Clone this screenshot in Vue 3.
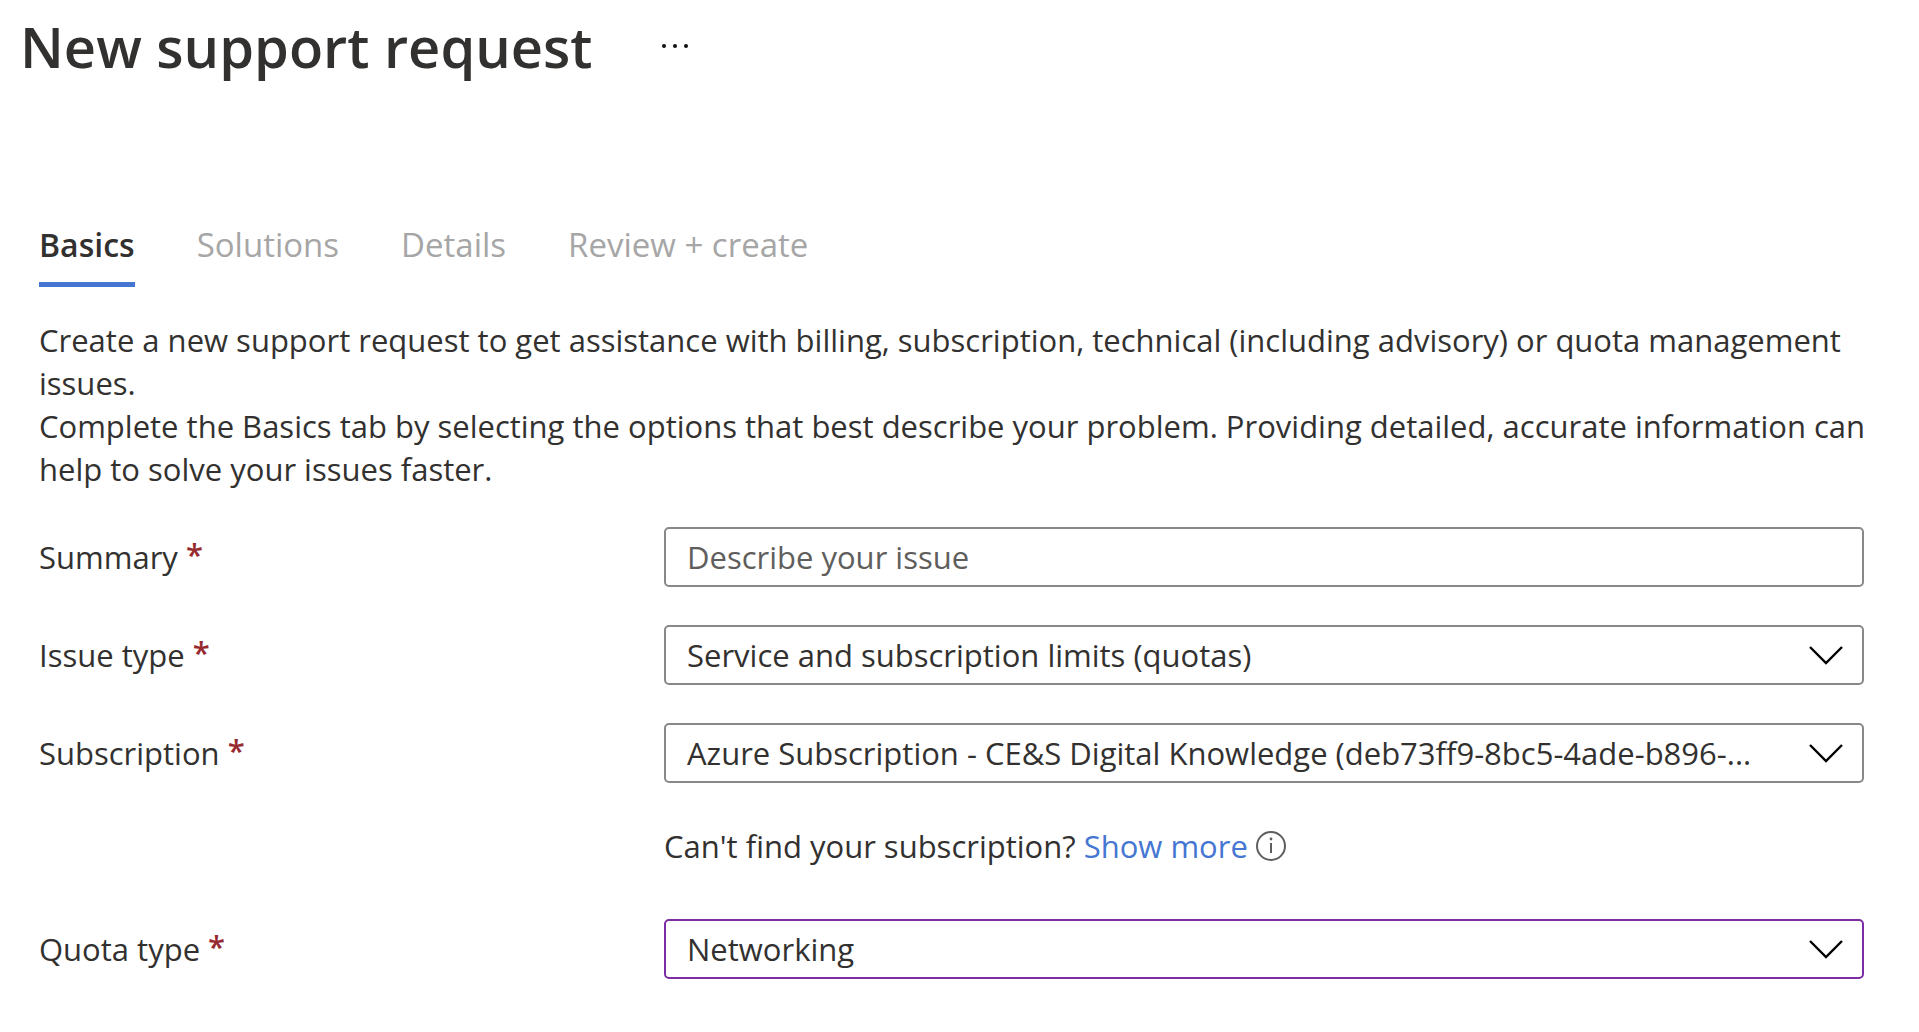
<script setup>
import { ref } from 'vue'

const tabs = ['Basics', 'Solutions', 'Details', 'Review + create']
const activeTab = ref('Basics')
const summary = ref('')
const issueType = ref('Service and subscription limits (quotas)')
const subscription = ref('Azure Subscription - CE&S Digital Knowledge (deb73ff9-8bc5-4ade-b896-...')
const quotaType = ref('Networking')
</script>

<template>
  <main class="page">
    <header class="header">
      <h1>New support request</h1>
      <button class="more" type="button" aria-label="More actions">
        <svg width="28" height="6" viewBox="0 0 28 6" fill="#111">
          <circle cx="3" cy="3" r="2" />
          <circle cx="14" cy="3" r="2" />
          <circle cx="25" cy="3" r="2" />
        </svg>
      </button>
    </header>

    <nav class="tabs" role="tablist">
      <button
        v-for="tab in tabs"
        :key="tab"
        type="button"
        role="tab"
        class="tab"
        :class="{ active: tab === activeTab }"
        :aria-selected="tab === activeTab"
        @click="activeTab = tab"
      >{{ tab }}</button>
    </nav>

    <section class="intro">
      <p>Create a new support request to get assistance with billing, subscription, technical (including advisory) or quota management issues.</p>
      <p>Complete the Basics tab by selecting the options that best describe your problem. Providing detailed, accurate information can help to solve your issues faster.</p>
    </section>

    <form class="form" @submit.prevent>
      <div class="row">
        <label for="summary">Summary <span class="required">*</span></label>
        <input id="summary" v-model="summary" class="control" type="text" placeholder="Describe your issue" />
      </div>

      <div class="row">
        <label for="issue-type">Issue type <span class="required">*</span></label>
        <div class="dropdown">
          <select id="issue-type" v-model="issueType" class="control">
            <option :value="issueType">{{ issueType }}</option>
          </select>
          <svg class="chevron" viewBox="0 0 34 20"><path d="M1 2l16 16L33 2" /></svg>
        </div>
      </div>

      <div class="row">
        <label for="subscription">Subscription <span class="required">*</span></label>
        <div class="dropdown">
          <select id="subscription" v-model="subscription" class="control">
            <option :value="subscription">{{ subscription }}</option>
          </select>
          <svg class="chevron" viewBox="0 0 34 20"><path d="M1 2l16 16L33 2" /></svg>
        </div>
      </div>

      <div class="row">
        <p class="hint">
          <span>Can't find your subscription? <a href="#">Show more</a></span>
          <svg class="info" viewBox="0 0 30 30">
            <circle cx="15" cy="15" r="14" fill="none" stroke="#605e5c" stroke-width="2" />
            <path d="M15 12v10" stroke="#605e5c" stroke-width="2" />
            <circle cx="15" cy="8" r="1.4" fill="#605e5c" />
          </svg>
        </p>
      </div>

      <div class="row">
        <label for="quota-type">Quota type <span class="required">*</span></label>
        <div class="dropdown">
          <select id="quota-type" v-model="quotaType" class="control focused">
            <option :value="quotaType">{{ quotaType }}</option>
          </select>
          <svg class="chevron" viewBox="0 0 34 20"><path d="M1 2l16 16L33 2" /></svg>
        </div>
      </div>
    </form>
  </main>
</template>

<style>
body {
  margin: 0;
  background: #fff;
}
</style>

<style scoped>
.page {
  font-family: "Segoe UI", "Open Sans", "Noto Sans", sans-serif;
  font-size: 31px;
  line-height: 43px;
  color: #323130;
}

.header {
  display: flex;
  align-items: center;
  gap: 68px;
  padding: 6px 20px 0;
}

h1 {
  margin: 0;
  font-size: 56px;
  font-weight: 600;
  line-height: 80px;
}

.more {
  display: flex;
  padding: 0;
  border: 0;
  background: none;
}

.tabs {
  display: flex;
  gap: 62px;
  padding: 137px 39px 0;
}

.tab {
  padding: 0 0 16px;
  border: 0;
  border-bottom: 5px solid transparent;
  background: none;
  font: inherit;
  font-size: 33px;
  color: #a6a6a6;
}

.tab.active {
  border-color: #4476d2;
  font-size: 32px;
  font-weight: 600;
  color: #323130;
}

.intro {
  padding: 32px 39px 0;
}

p {
  margin: 0;
}

.form {
  display: flex;
  flex-direction: column;
  gap: 38px;
  padding: 36px 55px 40px 39px;
}

.row {
  display: grid;
  grid-template-columns: 625px 1fr;
  align-items: center;
  min-height: 60px;
}

.required {
  font-weight: 600;
  line-height: 1;
  vertical-align: 3px;
  color: #962a2f;
}

.dropdown {
  position: relative;
}

.control {
  display: block;
  box-sizing: border-box;
  width: 100%;
  height: 60px;
  padding: 0 21px;
  border: 2px solid #8a8886;
  border-radius: 5px;
  outline: 0;
  appearance: none;
  background: #fff;
  font: inherit;
  color: #323130;
}

.control::placeholder {
  color: #605e5c;
  opacity: 1;
}

.control.focused {
  border-color: #7d2da3;
}

.chevron {
  position: absolute;
  top: 20px;
  right: 21px;
  width: 34px;
  height: 20px;
  fill: none;
  stroke: #000;
  stroke-width: 2.4;
  pointer-events: none;
}

.hint {
  display: flex;
  grid-column: 2;
  align-items: center;
  gap: 8px;
  padding-bottom: 10px;
}

.hint a {
  color: #4476d2;
  text-decoration: none;
}

.info {
  width: 30px;
  height: 30px;
}
</style>
